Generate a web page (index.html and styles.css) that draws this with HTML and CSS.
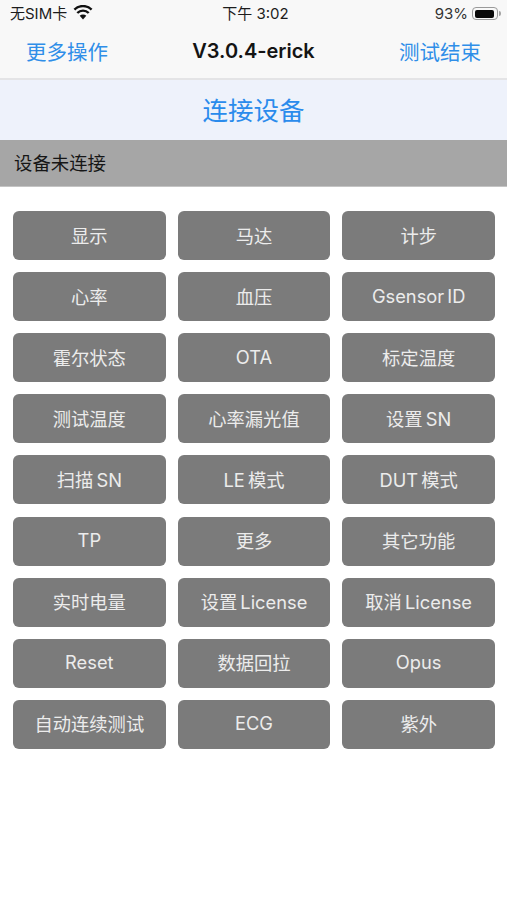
FILE: index.html
```html
<!DOCTYPE html>
<html lang="zh-CN">
<head>
<meta charset="utf-8">
<title>V3.0.4-erick</title>
<link rel="stylesheet" href="styles.css">
</head>
<body>
<header class="top">
  <div class="status">
    <div class="status-left">
      <span>无SIM卡</span>
      <svg class="wifi" width="20" height="15" viewBox="0 0 20 15"><path d="M10 14.5 6.7 10.8a4.6 4.6 0 0 1 6.6 0Z" fill="#111"/><path d="M4.3 8a8 8 0 0 1 11.4 0M1.4 4.6a12.2 12.2 0 0 1 17.2 0" fill="none" stroke="#111" stroke-width="2.4"/></svg>
    </div>
    <div class="status-time">下午 3:02</div>
    <div class="status-right">
      <span>93%</span>
      <span class="battery"><span class="battery-fill"></span></span>
      <span class="battery-tip"></span>
    </div>
  </div>
  <nav class="nav">
    <span class="nav-btn">更多操作</span>
    <span class="nav-title">V3.0.4-erick</span>
    <span class="nav-btn">测试结束</span>
  </nav>
</header>
<div class="connect">连接设备</div>
<div class="state">设备未连接</div>
<main class="grid">
  <button class="btn">显示</button>
  <button class="btn">马达</button>
  <button class="btn">计步</button>
  <button class="btn">心率</button>
  <button class="btn">血压</button>
  <button class="btn">Gsensor ID</button>
  <button class="btn">霍尔状态</button>
  <button class="btn">OTA</button>
  <button class="btn">标定温度</button>
  <button class="btn">测试温度</button>
  <button class="btn">心率漏光值</button>
  <button class="btn">设置 SN</button>
  <button class="btn">扫描 SN</button>
  <button class="btn">LE 模式</button>
  <button class="btn">DUT 模式</button>
  <button class="btn">TP</button>
  <button class="btn">更多</button>
  <button class="btn">其它功能</button>
  <button class="btn">实时电量</button>
  <button class="btn">设置 License</button>
  <button class="btn">取消 License</button>
  <button class="btn">Reset</button>
  <button class="btn">数据回拉</button>
  <button class="btn">Opus</button>
  <button class="btn">自动连续测试</button>
  <button class="btn">ECG</button>
  <button class="btn">紫外</button>
</main>
</body>
</html>
```
FILE: styles.css
```css
* { box-sizing: border-box; }
html, body { margin: 0; padding: 0; }
body {
  width: 507px;
  height: 900px;
  overflow: hidden;
  background: #fff;
  font-family: Inter, "Noto Sans CJK SC", sans-serif;
}
.top {
  height: 80px;
  background: #f8f8f8;
  border-bottom: 2px solid #e4e4e6;
}
.status {
  height: 27px;
  padding: 0 6px 0 10px;
  display: grid;
  grid-template-columns: 1fr auto 1fr;
  align-items: center;
  font-size: 15px;
  line-height: 26px;
  color: #1c1c1c;
}
.status-left { display: flex; align-items: center; gap: 6px; }
.wifi { margin-top: -2px; }
.status-time { font-size: 15px; }
.status-right { display: flex; align-items: center; justify-content: flex-end; }
.status-right > span:first-child { margin-right: 4px; color: #333; }
.battery {
  width: 26px;
  height: 13px;
  border: 1.5px solid #9a9a9a;
  border-radius: 4px;
  padding: 1.5px;
  display: block;
}
.battery-fill { display: block; width: 92%; height: 100%; background: #0a0a0a; border-radius: 2px; }
.battery-tip { width: 2px; height: 5px; background: #a5a5a5; border-radius: 0 2px 2px 0; margin-left: 1px; }
.nav {
  height: 51px;
  padding: 0 26px 3px;
  display: flex;
  align-items: center;
  justify-content: space-between;
}
.nav-btn { font-size: 20.5px; color: #2f8ee8; }
.nav-title { font-size: 20px; font-weight: 600; color: #141414; }
.connect {
  height: 60px;
  padding-bottom: 3px;
  background: #eef2fb;
  color: #2a8bec;
  font-size: 25.5px;
  display: flex;
  align-items: center;
  justify-content: center;
}
.state {
  height: 47px;
  padding: 0 0 3px 14px;
  background: #a6a6a6;
  border-bottom: 1px solid #c4c4c4;
  color: #161616;
  font-size: 18.4px;
  display: flex;
  align-items: center;
}
.grid {
  padding: 24px 12px 0 13px;
  display: grid;
  grid-template-columns: repeat(3, 1fr);
  grid-auto-rows: 49px;
  column-gap: 12px;
  row-gap: 12.12px;
}
.btn {
  border: 0;
  padding: 0 0 2px;
  border-radius: 6px;
  background: #7b7b7b;
  color: #ececec;
  font-family: inherit;
  font-size: 18.3px;
  word-spacing: -2px;
}
```
